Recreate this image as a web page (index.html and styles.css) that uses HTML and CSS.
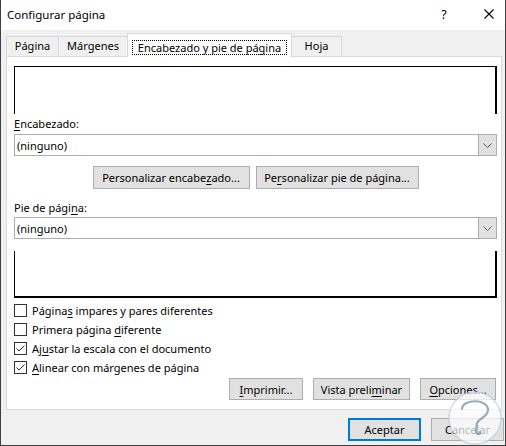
FILE: index.html
```html
<!DOCTYPE html>
<html lang="es">
<head>
<meta charset="utf-8">
<title>Configurar página</title>
<link rel="stylesheet" href="styles.css">
</head>
<body>
<div class="window">
  <div class="titlebar">
    <span class="title">Configurar página</span>
    <span class="help">?</span>
    <svg class="close" width="10" height="10" viewBox="0 0 10 10"><path d="M0.5 0.5L9.5 9.5M9.5 0.5L0.5 9.5" stroke="#000" stroke-width="1.1" fill="none"/></svg>
  </div>
  <div class="tabs">
    <div class="tab w1">Página</div>
    <div class="tab w2">Márgenes</div>
    <div class="tab w3 active"><span class="focus">Encabezado y pie de página</span></div>
    <div class="tab w4">Hoja</div>
  </div>
  <div class="panel">
    <div class="preview top"></div>
    <div class="label"><u>E</u>ncabezado:</div>
    <div class="select">
      <span class="value">(ninguno)</span>
      <span class="arrow"><svg width="9" height="5" viewBox="0 0 9 5"><path d="M0.5 0.5L4.5 4.5L8.5 0.5" stroke="#606060" stroke-width="1" fill="none"/></svg></span>
    </div>
    <div class="row center">
      <div class="btn b-enc">Personalizar encabe<u>z</u>ado...</div>
      <div class="btn b-pie">Pe<u>r</u>sonalizar pie de página...</div>
    </div>
    <div class="label l2">Pie de pági<u>n</u>a:</div>
    <div class="select s2">
      <span class="value">(ninguno)</span>
      <span class="arrow"><svg width="9" height="5" viewBox="0 0 9 5"><path d="M0.5 0.5L4.5 4.5L8.5 0.5" stroke="#606060" stroke-width="1" fill="none"/></svg></span>
    </div>
    <div class="preview bottom"></div>
    <div class="checks">
      <div class="check"><span class="box"></span><span>Página<u>s</u> impares y pares diferentes</span></div>
      <div class="check"><span class="box"></span><span>Primera página <u>d</u>iferente</span></div>
      <div class="check"><span class="box"><svg width="11" height="11" viewBox="0 0 11 11"><path d="M1.5 5.5L4 8L9.5 2.5" stroke="#333" stroke-width="1" fill="none"/></svg></span><span>Aj<u>u</u>star la escala con el documento</span></div>
      <div class="check"><span class="box"><svg width="11" height="11" viewBox="0 0 11 11"><path d="M1.5 5.5L4 8L9.5 2.5" stroke="#333" stroke-width="1" fill="none"/></svg></span><span><u>A</u>linear con márgenes de página</span></div>
    </div>
    <div class="row right">
      <div class="btn small b-imp"><u>I</u>mprimir...</div>
      <div class="btn small b-vis">Vista preli<u>m</u>inar</div>
      <div class="btn small b-opc"><u>O</u>pciones...</div>
    </div>
  </div>
  <div class="dialog-buttons">
    <div class="btn small default">Aceptar</div>
    <div class="btn small">Cancelar</div>
  </div>
  <svg class="watermark" width="60" height="60" viewBox="0 0 60 60">
    <circle cx="30" cy="29" r="26" fill="rgba(255,255,255,0.7)" stroke="rgba(185,198,210,0.6)" stroke-width="1.5"/>
    <path d="M17 20 C17 10, 43 9, 43 21 C43 28, 34 29, 32 34 L31 42 C31 46, 36 46, 35 43" stroke="rgba(120,145,170,0.75)" stroke-width="2.2" fill="none" stroke-linecap="round"/>
  </svg>
</div>
</body>
</html>
```
FILE: styles.css
```css
body {
  margin: 0;
  font-family: "Noto Sans", "Open Sans", sans-serif;
  font-size: 11px;
  color: #000;
}
u {
  text-decoration: underline;
  text-decoration-thickness: 1px;
  text-underline-offset: 2px;
}
.window {
  position: relative;
  width: 506px;
  height: 446px;
  box-sizing: border-box;
  border: 1px solid #3f3f3f;
  border-top: none;
  background: #f0f0f0;
  overflow: hidden;
}
.titlebar {
  height: 30px;
  background: #fff;
  display: flex;
  align-items: center;
  padding-bottom: 2px;
  box-sizing: border-box;
}
.title {
  flex: 1;
  padding-left: 6px;
  font-size: 11.5px;
}
.help {
  width: 14px;
  text-align: center;
  font-size: 12.5px;
  margin-right: 33px;
}
.close {
  margin-right: 11px;
}
.tabs {
  display: flex;
  align-items: flex-end;
  height: 26px;
  padding-left: 5px;
}
.tab {
  box-sizing: border-box;
  height: 20px;
  border: 1px solid #d9d9d9;
  border-bottom: none;
  margin-left: -1px;
  text-align: center;
  line-height: 18px;
}
.tab.w1 { width: 53px; margin-left: 0; }
.tab.w2 { width: 70px; }
.tab.w3 { width: 165px; }
.tab.w4 { width: 51px; }
.tab.active {
  height: 24px;
  background: #fff;
  margin-bottom: -1px;
  position: relative;
  z-index: 1;
  padding-top: 5px;
}
.focus {
  display: inline-block;
  border: 1px dotted #000;
  line-height: 13px;
  padding: 0 5px;
}
.panel {
  margin-left: 5px;
  width: 496px;
  height: 354px;
  box-sizing: border-box;
  border: 1px solid #d9d9d9;
  background: #fff;
  padding: 9px 4px 0 7px;
}
.preview {
  box-sizing: border-box;
  border-left: 1px solid #000;
  border-right: 2px solid #000;
}
.preview.top {
  height: 48px;
  border-top: 1px solid #000;
}
.preview.bottom {
  height: 47px;
  margin-top: 12px;
  border-bottom: 2px solid #000;
}
.label {
  margin-top: 2px;
  line-height: 16px;
}
.label.l2 {
  margin-top: 11px;
}
.select {
  margin-top: 2px;
  height: 22px;
  box-sizing: border-box;
  border: 1px solid #adadad;
  display: flex;
  align-items: stretch;
}
.select.s2 {
  margin-top: 1px;
}
.value {
  flex: 1;
  padding-left: 2px;
  display: flex;
  align-items: center;
}
.arrow {
  width: 17px;
  background: #e1e1e1;
  border-left: 1px solid #adadad;
  display: flex;
  align-items: center;
  justify-content: center;
}
.row {
  display: flex;
}
.row.center {
  justify-content: center;
  gap: 6px;
  margin-top: 10px;
}
.row.right {
  justify-content: flex-end;
  gap: 10px;
  margin-right: 1px;
  margin-top: 1px;
}
.btn {
  box-sizing: border-box;
  height: 23px;
  border: 1px solid #adadad;
  background: #e1e1e1;
  display: flex;
  align-items: center;
  justify-content: center;
  white-space: nowrap;
}
.btn.small {
  height: 22px;
}
.b-enc { width: 157px; }
.b-pie { width: 163px; }
.b-imp { width: 74px; }
.b-vis { width: 97px; }
.b-opc { width: 76px; }
.checks {
  margin-top: 3px;
}
.check {
  height: 19px;
  display: flex;
  align-items: center;
}
.box {
  width: 13px;
  height: 13px;
  box-sizing: border-box;
  border: 1px solid #333;
  background: #fff;
  margin-right: 5px;
  display: flex;
  align-items: center;
  justify-content: center;
}
.dialog-buttons {
  display: flex;
  justify-content: flex-end;
  gap: 10px;
  margin-top: 8px;
  padding-right: 1px;
}
.dialog-buttons .btn {
  width: 73px;
  height: 23px;
}
.btn.default {
  border: 2px solid #0078d7;
}
.watermark {
  position: absolute;
  left: 444px;
  top: 389px;
}
```
